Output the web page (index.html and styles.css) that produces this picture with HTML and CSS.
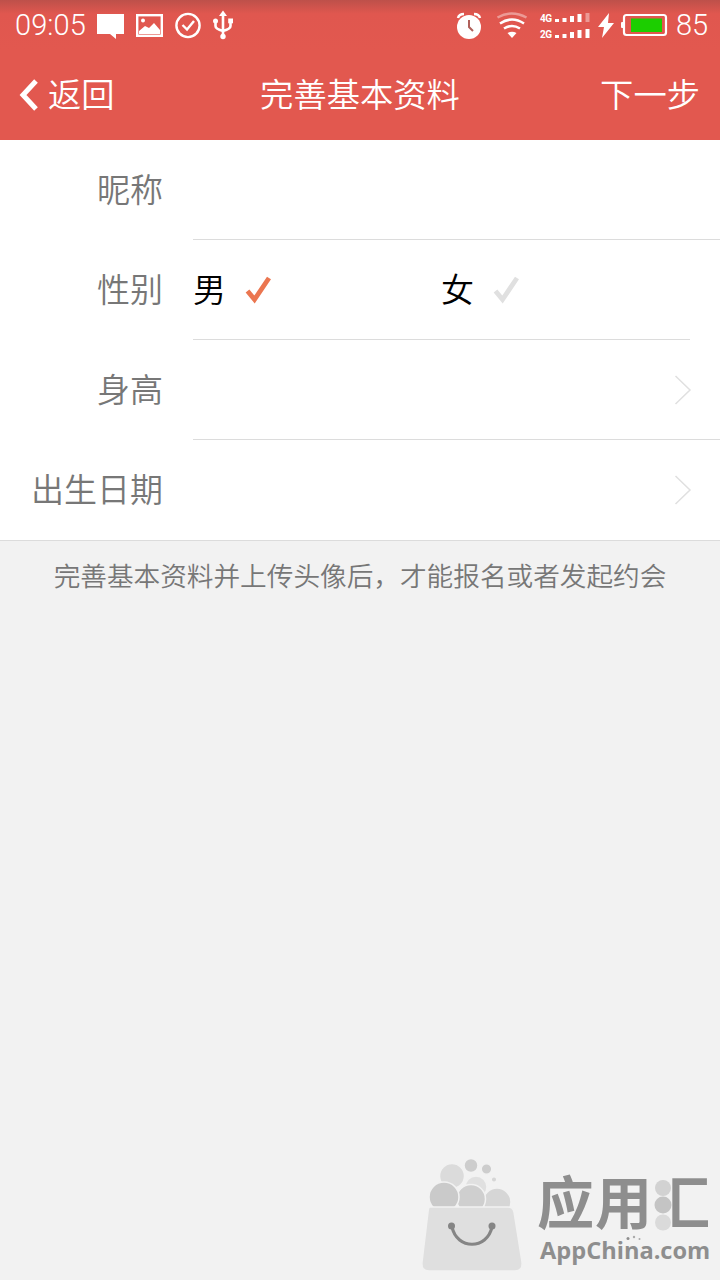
FILE: index.html
```
<!DOCTYPE html>
<html lang="zh-CN">
<head>
    <meta charset="UTF-8">
    <meta name="viewport" content="width=device-width, initial-scale=1.0">
    <title>完善基本资料</title>
    <link rel="stylesheet" href="styles.css">
</head>
<body>

    <!-- 状态栏 -->
    <div class="status-bar">
        <span class="time">09:05</span>
        <svg class="status-icons" width="140" height="50" viewBox="0 0 140 50">
            <path d="M0 14h27v20h-8v5l-6-5H0z" fill="#fff"/>
            <rect x="40.2" y="15.2" width="24.6" height="20.6" fill="none" stroke="#fff" stroke-width="2.4"/>
            <circle cx="46" cy="20.5" r="2" fill="#fff"/>
            <path d="M42 34v-3l6-5 4 2 5-5 6 7v4z" fill="#fff"/>
            <circle cx="91" cy="25.5" r="11.6" fill="none" stroke="#fff" stroke-width="2.4"/>
            <path d="M85.5 25l4.500 4.500 7-8.500" fill="none" stroke="#fff" stroke-width="2.4"/>
            <path d="M126 14v23M118.500 21v5q0 3 7.500 5q7.500-2 7.500-5v-5" fill="none" stroke="#fff" stroke-width="2.6"/>
            <path d="M126 10.500l4 5.500h-8z" fill="#fff"/>
            <circle cx="126" cy="36.500" r="2.700" fill="#fff"/>
            <circle cx="118.500" cy="21" r="2.500" fill="#fff"/>
            <rect x="131.200" y="18.500" width="4.800" height="4.800" fill="#fff"/>
        </svg>
        <svg class="status-icons right" width="74" height="50" viewBox="0 0 74 50">
            <circle cx="13" cy="27" r="12" fill="#fff"/>
            <path d="M2 18q1-4 6-4M18 14q5 0 6 4" fill="none" stroke="#fff" stroke-width="2.500"/>
            <path d="M13 20v7l4 4" fill="none" stroke="#b0605a" stroke-width="2"/>
            <path d="M41.500 17.500q14-8 29 0" fill="none" stroke="#fff" stroke-opacity=".4" stroke-width="2.500"/>
            <path d="M44 23.500q12-8 24 0M48 28.500q8-5 16 0" fill="none" stroke="#fff" stroke-width="2.600"/>
            <path d="M51.500 33q4.500-2.500 9 0L56 38z" fill="#fff"/>
        </svg>
        <div class="signal">
            <div class="signal-row">
                <span>4G</span>
                <svg width="35" height="12" viewBox="0 0 35 12">
                    <path d="M0 7h4v3H0zM7.500 6h4v4h-4zM15 4h4v6h-4zM22.500 2h4v8h-4z" fill="#fff"/>
                    <path d="M30.500 1h4v9h-4z" fill="#fff" fill-opacity=".4"/>
                </svg>
            </div>
            <div class="signal-row">
                <span>2G</span>
                <svg width="35" height="12" viewBox="0 0 35 12">
                    <path d="M0 7h4v3H0zM7.500 6h4v4h-4zM15 4h4v6h-4zM22.500 2h4v8h-4zM30.500 1h4v9h-4z" fill="#fff"/>
                </svg>
            </div>
        </div>
        <svg class="power" width="70" height="50" viewBox="0 0 70 50">
            <path d="M11 13L0 27h6L4 38l12-15h-6z" fill="#fff"/>
            <rect x="26" y="15" width="42" height="20" rx="2.500" fill="none" stroke="#fff" stroke-width="2.200"/>
            <rect x="23" y="22" width="3" height="6" rx="1" fill="#fff"/>
            <rect x="33" y="18.500" width="31" height="13.500" fill="#1cce00"/>
        </svg>
        <span class="percent">85</span>
    </div>

    <!-- 标题栏 -->
    <header class="header">
        <a href="#" class="back">
            <svg width="20" height="32" viewBox="0 0 20 32">
                <path d="M18 2L5 16l13 14" fill="none" stroke="#fff" stroke-width="5"/>
            </svg>
            <span>返回</span>
        </a>
        <h1>完善基本资料</h1>
        <a href="#" class="next">下一步</a>
    </header>

    <!-- 资料表单 -->
    <div class="form">
        <div class="row">
            <span class="label">昵称</span>
            <div class="field"></div>
        </div>
        <div class="row">
            <span class="label">性别</span>
            <div class="field short">
                <div class="option">
                    <span>男</span>
                    <svg width="28" height="30" viewBox="0 0 28 30">
                        <path d="M3.500 16l7 8.500L25 3" fill="none" stroke="#eb7650" stroke-width="4.800"/>
                    </svg>
                </div>
                <div class="option">
                    <span>女</span>
                    <svg width="28" height="30" viewBox="0 0 28 30">
                        <path d="M3.500 16l7 8.500L25 3" fill="none" stroke="#e0e0e0" stroke-width="4.800"/>
                    </svg>
                </div>
            </div>
        </div>
        <div class="row">
            <span class="label">身高</span>
            <div class="field select">
                <svg width="18" height="32" viewBox="0 0 18 32">
                    <path d="M1.500 2L16 16 1.500 30" fill="none" stroke="#e0e0e0" stroke-width="1.500"/>
                </svg>
            </div>
        </div>
        <div class="row">
            <span class="label">出生日期</span>
            <div class="field select">
                <svg width="18" height="32" viewBox="0 0 18 32">
                    <path d="M1.500 2L16 16 1.500 30" fill="none" stroke="#e0e0e0" stroke-width="1.500"/>
                </svg>
            </div>
        </div>
    </div>

    <p class="hint">完善基本资料并上传头像后，才能报名或者发起约会</p>

    <!-- 应用汇标志 -->
    <footer class="brand">
        <svg class="bag" width="102" height="114" viewBox="0 0 102 114">
            <g stroke="#f2f2f2" stroke-width="1.500">
                <circle cx="31" cy="18" r="12.500" fill="#dbdbdb"/>
                <circle cx="55" cy="29" r="11" fill="#e0e0e0"/>
                <circle cx="50" cy="7.500" r="7" fill="#cdcdcd"/>
                <circle cx="65.500" cy="11" r="5.300" fill="#cdcdcd"/>
                <circle cx="73" cy="21.500" r="2.800" fill="#d6d6d6"/>
                <circle cx="76" cy="44" r="14" fill="#d6d6d6"/>
                <circle cx="50" cy="41" r="14.500" fill="#cfcfcf"/>
                <circle cx="23" cy="39" r="15" fill="#cacaca"/>
                <path d="M9 49h78q5 0 6 5l8 50q1 9-7 9H8q-8 0-7-9L7 54q.5-5 2-5z" fill="#dfdfdf"/>
            </g>
            <path d="M31 69C36 92 66 92 71 69" fill="none" stroke="#858585" stroke-width="3.200"/>
            <circle cx="30.500" cy="68" r="3.500" fill="#858585"/>
            <circle cx="71" cy="68" r="3.500" fill="#858585"/>
        </svg>
        <div class="wordmark">
            <div class="brand-name">
                <span>应</span><span>用</span><span class="hui">汇</span>
                <svg class="bubbles" width="18" height="54" viewBox="0 0 18 54">
                    <circle cx="9" cy="9" r="8" fill="#d2d2d2"/>
                    <circle cx="9" cy="26" r="8.500" fill="#c4c4c4"/>
                    <circle cx="9" cy="43.500" r="8" fill="#dadada"/>
                </svg>
            </div>
            <div class="brand-url">
                AppChina.com
                <svg class="sparks" width="16" height="6" viewBox="0 0 16 6">
                    <circle cx="2" cy="3.500" r="1.500" fill="#8e8e8e"/>
                    <circle cx="8" cy="2" r="1.200" fill="#aaa"/>
                    <circle cx="13.500" cy="4" r="1" fill="#aaa"/>
                </svg>
            </div>
        </div>
    </footer>

</body>
</html>
```

FILE: styles.css
```
* {
    box-sizing: border-box;
}

body {
    margin: 0;
    min-height: 1280px;
    display: flex;
    flex-direction: column;
    font-family: 'Noto Sans CJK SC', sans-serif;
    font-weight: 350;
    background-color: #f2f2f2;
    color: #000;
}

svg {
    display: block;
    flex-shrink: 0;
}

/* 状态栏 */
.status-bar {
    display: flex;
    align-items: center;
    height: 50px;
    padding-left: 15px;
    background: linear-gradient(#bd504a, #e0574f 14px, #e2584f);
    color: #fff;
    font-family: Roboto, sans-serif;
    font-size: 29px;
    font-weight: 300;
}

.time {
    width: 82px;
    letter-spacing: 0.1px;
}

.status-icons.right {
    margin-left: 219px;
}

.signal {
    width: 50px;
    margin-left: 10px;
    padding-top: 2px;
}

.signal-row {
    display: flex;
    align-items: center;
    gap: 2px;
    height: 16px;
}

.signal-row span {
    width: 13px;
    font-size: 10px;
    font-weight: 700;
    letter-spacing: -0.5px;
}

.power {
    margin-left: 8px;
}

.percent {
    margin-left: 8px;
}

/* 标题栏 */
.header {
    display: grid;
    grid-template-columns: 1fr auto 1fr;
    align-items: center;
    height: 90px;
    padding: 0 20px 0 18px;
    background-color: #e2584f;
    color: #fff;
    font-size: 33.3px;
    line-height: 50px;
}

.header h1 {
    margin: 0;
    padding: 0 0 5px 2px;
    font-size: 33.3px;
    font-weight: 350;
}

.header a {
    color: #fff;
    text-decoration: none;
}

.back {
    display: flex;
    align-items: center;
    gap: 10px;
}

.back span,
.next {
    padding-bottom: 5px;
}

.next {
    text-align: right;
}

/* 资料表单 */
.form {
    background-color: #fff;
    border-bottom: 1px solid #dcdcdc;
}

.row {
    display: flex;
    height: 100px;
    font-size: 33px;
    line-height: 96px;
}

.label {
    width: 163px;
    margin-right: 30px;
    text-align: right;
    color: #777;
}

.field {
    display: flex;
    align-items: center;
    flex: 1;
    border-bottom: 1px solid #dcdcdc;
}

.row:last-child .field {
    border-bottom: none;
}

.field.short {
    margin-right: 30px;
}

.field.select {
    justify-content: flex-end;
    padding-right: 28px;
}

.option {
    display: flex;
    align-items: center;
    gap: 18px;
    width: 248px;
}

.option span {
    padding-bottom: 3px;
}

.hint {
    margin: 14px 0 0;
    text-align: center;
    font-size: 26.65px;
    line-height: 40px;
    color: #777;
}

/* 应用汇标志 */
.brand {
    display: flex;
    align-items: flex-end;
    gap: 14px;
    margin-top: auto;
    padding: 0 8px 8px 421px;
}

.wordmark {
    padding-bottom: 7px;
    color: #8e8e8e;
    font-weight: 700;
}

.brand-name {
    position: relative;
    display: flex;
    gap: 1px;
    font-family: 'Liberation Sans', 'Noto Sans CJK SC', sans-serif;
    font-size: 57px;
    line-height: 62px;
}

/* 三点水由圆点代替 */
.hui {
    background: linear-gradient(to right, transparent 34%, #8e8e8e 34%);
    -webkit-background-clip: text;
    background-clip: text;
    color: transparent;
}

.bubbles {
    position: absolute;
    left: 117px;
    top: 6px;
}

.brand-url {
    position: relative;
    font-family: 'Open Sans', sans-serif;
    font-size: 23.6px;
    line-height: 30px;
    padding-left: 3px;
}

.sparks {
    position: absolute;
    left: 89px;
    top: 0;
}
```
